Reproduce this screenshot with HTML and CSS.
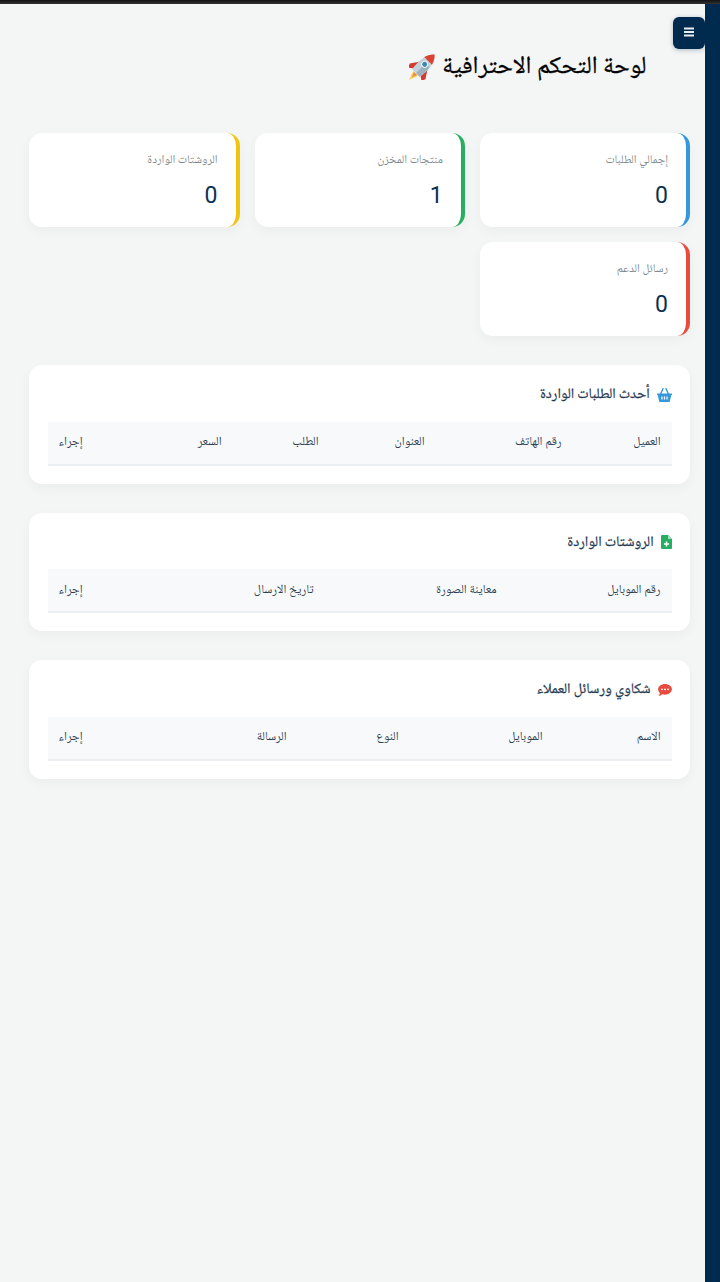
FILE: index.html
```
<!DOCTYPE html>
<html lang="ar" dir="rtl">
<head>
<meta charset="utf-8">
<title>لوحة التحكم</title>
<link rel="stylesheet" href="styles.css">
</head>
<body>
<div class="topbar"></div>
<div class="shell">
  <aside class="sidebar"></aside>
  <button class="menu-btn" aria-label="menu">
    <svg viewBox="0 0 10 10" width="10" height="10"><path d="M0 .5h10v2H0zM0 4h10v2H0zM0 7.500h10v2H0z" fill="#e8eef3"/></svg>
  </button>
  <main class="main">
    <h1 class="title"><span>لوحة التحكم الاحترافية</span>
      <svg class="rocket" viewBox="3 3 24 24" width="28" height="28">
        <g transform="rotate(45 15 15)">
          <path d="M12 24h6l-3 8z" fill="#f7d36a"/>
          <path d="M13.200 24h3.600l-1.800 4.500z" fill="#f08a3c"/>
          <path d="M10.500 14L5.500 21.500 7 25l4-3zM19.500 14l5 7.500L23 25l-4-3z" fill="#d23b2f"/>
          <path d="M15 1c5 4.500 6.500 13 4.500 22.500h-9C8.500 14 10 5.500 15 1z" fill="#c3d2da"/>
          <path d="M15 1c2.300 2 3.800 4.600 4.700 7.800h-9.400c.9-3.200 2.400-5.800 4.700-7.800z" fill="#d9432f"/>
          <path d="M15 12v11.500h4.500c.8-4 .9-7.900.4-11.500z" fill="#9db2bf"/>
          <circle cx="15" cy="13" r="3" fill="#edf3f6"/>
          <circle cx="15" cy="13" r="2.100" fill="#3f86b5"/>
        </g>
      </svg>
    </h1>

    <section class="stats">
      <div class="stat stat-blue"><div class="stat-label">إجمالي الطلبات</div><div class="stat-value">0</div></div>
      <div class="stat stat-green"><div class="stat-label">منتجات المخزن</div><div class="stat-value">1</div></div>
      <div class="stat stat-yellow"><div class="stat-label">الروشتات الواردة</div><div class="stat-value">0</div></div>
      <div class="stat stat-red"><div class="stat-label">رسائل الدعم</div><div class="stat-value">0</div></div>
    </section>

    <section class="panel">
      <h2 class="panel-title">
        <svg class="ico" viewBox="0 0 15 14" width="15" height="14"><path d="M0 5.500h15v1.600h-.8l-1.200 6a1 1 0 0 1-1 .9H3a1 1 0 0 1-1-.9l-1.200-6H0z" fill="#3498db"/><path d="M3.600 6l2.400-5.300M11.400 6L9 .7" stroke="#3498db" stroke-width="1.400" stroke-linecap="round" fill="none"/><path d="M5 8.500v3M7.500 8.500v3M10 8.500v3" stroke="#fff" stroke-width="1.200"/></svg>
        <span>أحدث الطلبات الواردة</span></h2>
      <table class="grid orders">
        <thead><tr><th>العميل</th><th>رقم الهاتف</th><th>العنوان</th><th>الطلب</th><th>السعر</th><th>إجراء</th></tr></thead>
      </table>
    </section>

    <section class="panel">
      <h2 class="panel-title">
        <svg class="ico" viewBox="0 0 11 14" width="11" height="14"><path d="M1 0h6l4 4v9a1 1 0 0 1-1 1H1a1 1 0 0 1-1-1V1a1 1 0 0 1 1-1z" fill="#27ae60"/><path d="M7 0l4 4H7z" fill="#a5e0bd"/><path d="M5.500 6.500v5M3 9h5" stroke="#fff" stroke-width="1.500"/></svg>
        <span>الروشتات الواردة</span></h2>
      <table class="grid rx">
        <thead><tr><th>رقم الموبايل</th><th>معاينة الصورة</th><th>تاريخ الارسال</th><th>إجراء</th></tr></thead>
      </table>
    </section>

    <section class="panel">
      <h2 class="panel-title">
        <svg class="ico" viewBox="0 0 15 13" width="14" height="12"><path d="M7.500 0C11.600 0 15 2.500 15 5.800s-3.400 5.800-7.500 5.800c-1 0-2-.2-2.900-.5C3.500 12 2 13 .4 13c.9-1 1.500-2 1.600-3.200C.8 8.800 0 7.400 0 5.800 0 2.500 3.400 0 7.500 0z" fill="#e74c3c"/><circle cx="4.200" cy="5.800" r="1" fill="#fff"/><circle cx="7.500" cy="5.800" r="1" fill="#fff"/><circle cx="10.800" cy="5.800" r="1" fill="#fff"/></svg>
        <span>شكاوي ورسائل العملاء</span></h2>
      <table class="grid complaints">
        <thead><tr><th>الاسم</th><th>الموبايل</th><th>النوع</th><th>الرسالة</th><th>إجراء</th></tr></thead>
      </table>
    </section>
  </main>
</div>
</body>
</html>
```
FILE: styles.css
```
* { box-sizing: border-box; }
html, body { margin: 0; height: 100%; }
body {
  background: #f4f6f6;
  font-family: "Noto Naskh Arabic", "Noto Sans Arabic", "DejaVu Sans", "Noto Sans", sans-serif;
  color: #0f2c46;
  display: flex;
  flex-direction: column;
  min-height: 1282px;
}
.topbar { height: 4px; background: linear-gradient(#111, #333); flex: none; }
.shell { flex: 1; display: flex; position: relative; }
.sidebar { width: 15px; background: #002b4f; flex: none; }
.menu-btn {
  position: absolute;
  top: 13px;
  right: 15px;
  width: 32px;
  height: 32px;
  border: 0;
  border-radius: 6px;
  background: #002b4f;
  box-shadow: 0 1px 5px rgba(0, 43, 79, .3);
  display: flex;
  align-items: center;
  justify-content: center;
  padding: 0 0 2px;
}
.main { flex: 1; padding: 0 14.6px 0 29.3px; }
.title {
  margin: 44px 44px 0 0;
  height: 85px;
  font-size: 24.6px;
  font-weight: 400;
  -webkit-text-stroke: .3px #000;
  color: #000;
  display: flex;
  gap: 5px;
  line-height: 36px;
}
.title span { padding-top: 2px; align-self: flex-start; }
.rocket { align-self: flex-start; margin-top: 4px; }
.stats {
  display: grid;
  grid-template-columns: repeat(3, 1fr);
  gap: 15px 14.6px;
}
.stat {
  height: 94px;
  background: #fff;
  border-radius: 13px;
  border-right: 4px solid;
  padding: 20px 18.4px 0 0;
  box-shadow: 0 4px 12px rgba(0, 0, 0, .04);
}
.stat-blue { border-color: #3498db; }
.stat-green { border-color: #27ae60; }
.stat-yellow { border-color: #f1c40f; }
.stat-red { border-color: #e74c3c; }
.stat-label { font-size: 11.8px; line-height: 14px; color: #7f8c8d; }
.stat-value {
  font-family: Roboto, sans-serif;
  font-size: 23px;
  line-height: 28px;
  margin-top: 14.5px;
  color: #0b3252;
}
.panel {
  background: #fff;
  border-radius: 13px;
  padding: 18.8px;
  height: 118.6px;
  margin-top: 29px;
  box-shadow: 0 4px 12px rgba(0, 0, 0, .04);
}
.panel-title {
  margin: 0 0 19px;
  height: 19px;
  font-size: 14.5px;
  line-height: 22px;
  font-weight: 400;
  -webkit-text-stroke: .25px #1f3a52;
  color: #1f3a52;
  display: flex;
  align-items: center;
  gap: 7px;
}
.panel-title span { padding-top: 4px; }
.ico { flex: none; margin-top: 3px; }
.grid { width: 100%; border-collapse: collapse; table-layout: fixed; }
.grid th {
  background: #f8f9fa;
  border-bottom: 2px solid #eceff1;
  height: 43px;
  padding: 0 11px;
  font-size: 12.3px;
  font-weight: 400;
  color: #2c3e50;
  text-align: right;
}
.orders th:nth-child(1) { width: 99px; }
.orders th:nth-child(2) { width: 137px; }
.orders th:nth-child(3) { width: 106px; }
.orders th:nth-child(4) { width: 97px; }
.orders th:nth-child(5) { width: 139px; }
.rx th:nth-child(1) { width: 164px; }
.rx th:nth-child(2) { width: 183px; }
.rx th:nth-child(3) { width: 231px; }
.complaints th:nth-child(1) { width: 118px; }
.complaints th:nth-child(2) { width: 144px; }
.complaints th:nth-child(3) { width: 112px; }
.complaints th:nth-child(4) { width: 204px; }
```
